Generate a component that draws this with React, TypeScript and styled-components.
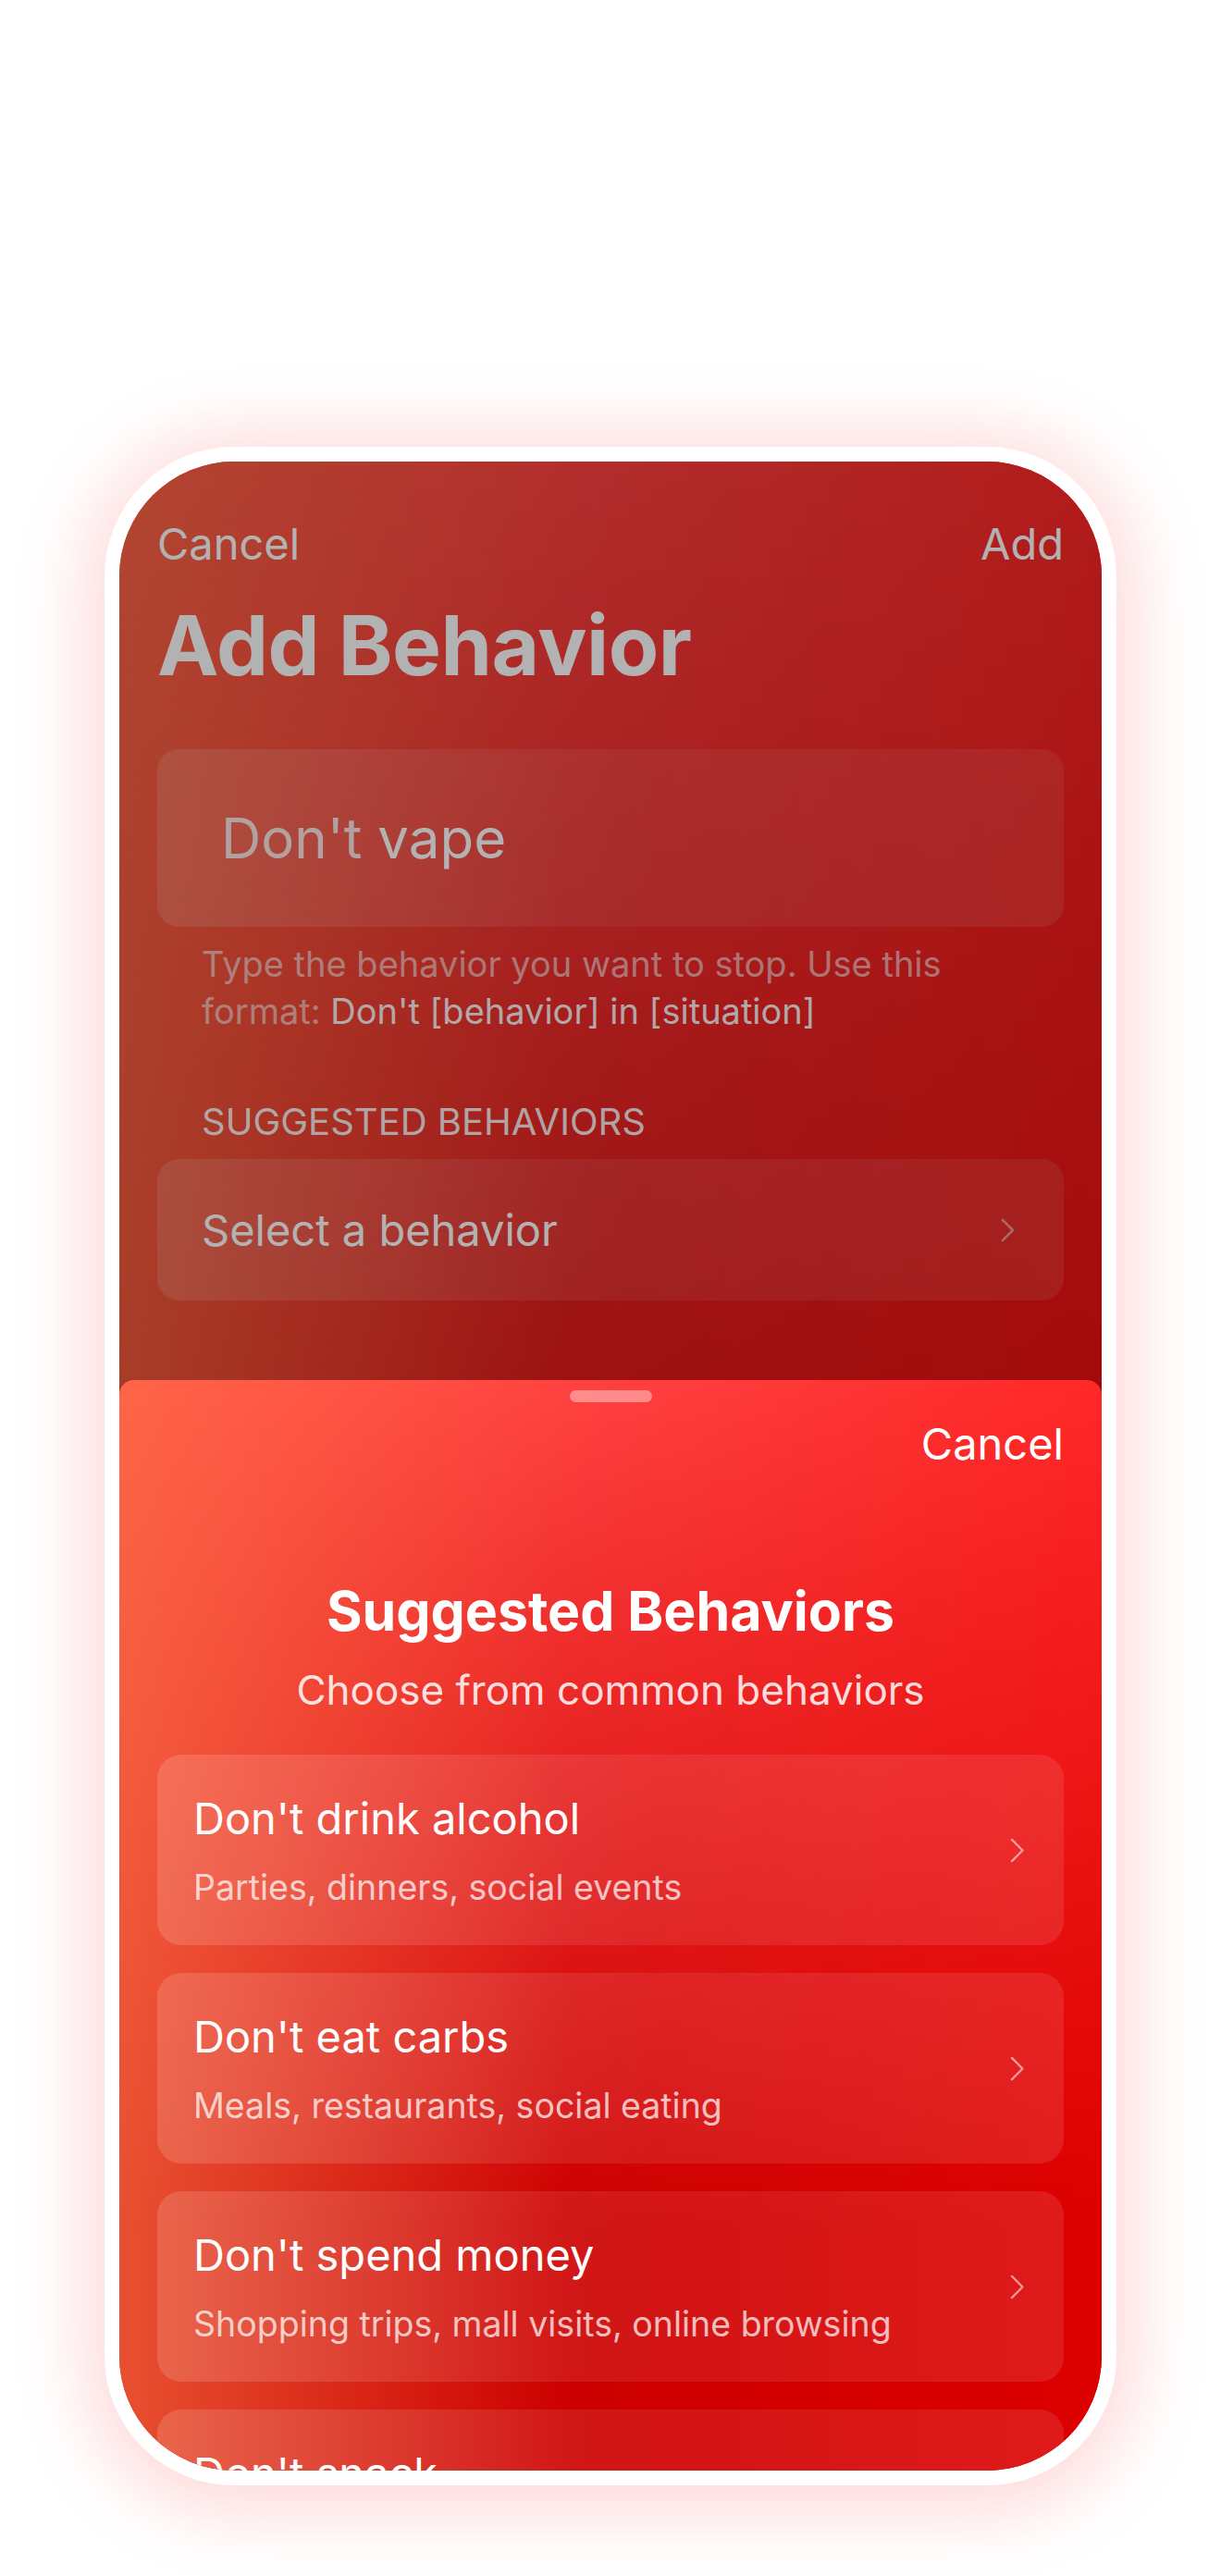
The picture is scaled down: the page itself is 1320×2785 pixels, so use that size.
import styled, { createGlobalStyle, css } from 'styled-components'

const GlobalStyle = createGlobalStyle`
  html, body {
    margin: 0;
    padding: 0;
    background: #fff;
  }
  body {
    font-family: Inter, 'Noto Sans', sans-serif;
    -webkit-font-smoothing: antialiased;
  }
  * {
    box-sizing: border-box;
  }
`

type Suggestion = { title: string; hint: string }

const suggestions: Suggestion[] = [
  { title: "Don't drink alcohol", hint: 'Parties, dinners, social events' },
  { title: "Don't eat carbs", hint: 'Meals, restaurants, social eating' },
  { title: "Don't spend money", hint: 'Shopping trips, mall visits, online browsing' },
  { title: "Don't snack", hint: 'Late nights, watching TV, work breaks' },
]

const Chevron = ({ size = 28, weight = 2.4 }: { size?: number; weight?: number }) => (
  <svg width={size * 0.6} height={size} viewBox="0 0 18 30" fill="none">
    <path d="M3 3 L15 15 L3 27" stroke="currentColor" strokeWidth={weight} strokeLinecap="round" strokeLinejoin="round" />
  </svg>
)

const App = () => {
  return (
    <>
      <GlobalStyle />
      <Page>
        <Phone>
          <Screen>
            <NavBar>
              <span>Cancel</span>
              <span>Add</span>
            </NavBar>
            <Title>Add Behavior</Title>
            <InputBox>
              <Prefix>Don't</Prefix>
              <Value>vape</Value>
            </InputBox>
            <Helper>
              Type the behavior you want to stop. Use this format: <strong>Don't [behavior] in [situation]</strong>
            </Helper>
            <SectionLabel>Suggested behaviors</SectionLabel>
            <SelectRow>
              <span>Select a behavior</span>
              <Muted>
                <Chevron size={28} weight={2.8} />
              </Muted>
            </SelectRow>
            <Dim />
            <Sheet>
              <Handle />
              <SheetCancel>Cancel</SheetCancel>
              <SheetTitle>Suggested Behaviors</SheetTitle>
              <SheetSubtitle>Choose from common behaviors</SheetSubtitle>
              <CardList>
                {suggestions.map((s) => (
                  <Card key={s.title}>
                    <CardText>
                      <CardTitle>{s.title}</CardTitle>
                      <CardHint>{s.hint}</CardHint>
                    </CardText>
                    <CardChevron>
                      <Chevron size={29} />
                    </CardChevron>
                  </Card>
                ))}
              </CardList>
            </Sheet>
          </Screen>
        </Phone>
      </Page>
    </>
  )
}

// red backdrop: darker, deeper red low down, brighter coral at the top
const redBackdrop = css`
  isolation: isolate;
  background: linear-gradient(90deg, #e85030 0%, #cc0000 46%, #dd0000 100%);

  &::before {
    content: '';
    position: absolute;
    inset: 0;
    z-index: -1;
    background: linear-gradient(90deg, #ff6549 0%, #ff4040 50%, #ff2828 100%);
    mask-image: linear-gradient(
      to bottom,
      #000 0%,
      rgba(0, 0, 0, 0.75) 18%,
      rgba(0, 0, 0, 0.35) 50%,
      rgba(0, 0, 0, 0) 78%
    );
  }
`

const Page = styled.div`
  width: 1320px;
  height: 2785px;
  padding-top: 483px;
  display: flex;
  justify-content: center;
  align-items: flex-start;
  overflow: hidden;
`

const Phone = styled.div`
  width: 1094px;
  height: 2204px;
  border: 16px solid #fff;
  border-radius: 140px;
  overflow: hidden;
  background: #fff;
  box-shadow: 0 8px 80px 16px rgba(255, 70, 70, 0.22);
`

const Screen = styled.div`
  position: relative;
  height: 100%;
  padding: 59px 41px 0;
  color: #fff;
  ${redBackdrop}
`

const NavBar = styled.div`
  display: flex;
  justify-content: space-between;
  font-size: 47px;
  line-height: 60px;
`

const Title = styled.h1`
  margin: 25px 0 0;
  font-size: 89px;
  line-height: 110px;
  font-weight: 700;
  letter-spacing: -0.5px;
`

const glass = css`
  background: linear-gradient(90deg, rgba(255, 255, 255, 0.15), rgba(255, 255, 255, 0.08) 55%, rgba(255, 255, 255, 0.1));
`

const InputBox = styled.div`
  margin-top: 57px;
  height: 192px;
  border-radius: 24px;
  padding-left: 69px;
  display: flex;
  align-items: center;
  gap: 17px;
  font-size: 60px;
  ${glass}
`

const Prefix = styled.span`
  color: rgba(255, 255, 255, 0.85);
`

const Value = styled.span`
  color: #fff;
`

const Helper = styled.p`
  margin: 15px 0 0;
  padding: 0 100px 0 48px;
  font-size: 38px;
  line-height: 51px;
  color: rgba(255, 255, 255, 0.6);

  strong {
    font-weight: 400;
    color: rgba(255, 255, 255, 0.95);
  }
`

const SectionLabel = styled.div`
  margin-top: 72px;
  padding-left: 48px;
  font-size: 40px;
  line-height: 44px;
  text-transform: uppercase;
  color: rgba(255, 255, 255, 0.92);
`

const SelectRow = styled.div`
  margin-top: 18px;
  height: 153px;
  border-radius: 24px;
  padding: 0 52px 0 48px;
  display: flex;
  align-items: center;
  justify-content: space-between;
  font-size: 47px;
  ${glass}
`

const Muted = styled.span`
  display: flex;
  color: rgba(255, 255, 255, 0.5);
`

const Dim = styled.div`
  position: absolute;
  inset: 0;
  background: rgba(0, 0, 0, 0.3);
`

const Sheet = styled.div`
  position: absolute;
  top: 993px;
  left: 0;
  right: 0;
  bottom: 0;
  padding: 11px 41px 0;
  border-radius: 16px 16px 0 0;
  display: flex;
  flex-direction: column;
  overflow: hidden;
  ${redBackdrop}

  > * {
    flex-shrink: 0;
  }
`

const Handle = styled.div`
  align-self: center;
  width: 89px;
  height: 13px;
  border-radius: 7px;
  background: rgba(255, 255, 255, 0.4);
`

const SheetCancel = styled.div`
  align-self: flex-end;
  margin-top: 15px;
  font-size: 47px;
  line-height: 60px;
`

const SheetTitle = styled.h2`
  margin: 115px 0 0;
  text-align: center;
  font-size: 59px;
  line-height: 72px;
  font-weight: 700;
`

const SheetSubtitle = styled.div`
  margin-top: 21px;
  text-align: center;
  font-size: 44px;
  line-height: 56px;
  color: rgba(255, 255, 255, 0.85);
`

const CardList = styled.div`
  margin-top: 42px;
  display: flex;
  flex-direction: column;
  gap: 30px;
`

const Card = styled.div`
  flex-shrink: 0;
  height: 206px;
  border-radius: 26px;
  padding: 40px 42px 39px 39px;
  display: flex;
  align-items: center;
  justify-content: space-between;
  ${glass}
`

const CardText = styled.div`
  display: flex;
  flex-direction: column;
  align-self: flex-start;
`

const CardTitle = styled.div`
  font-size: 47px;
  line-height: 58px;
`

const CardHint = styled.div`
  margin-top: 23px;
  font-size: 37.5px;
  line-height: 46px;
  color: rgba(255, 255, 255, 0.72);
`

const CardChevron = styled.span`
  display: flex;
  color: rgba(255, 255, 255, 0.55);
`

export default App
